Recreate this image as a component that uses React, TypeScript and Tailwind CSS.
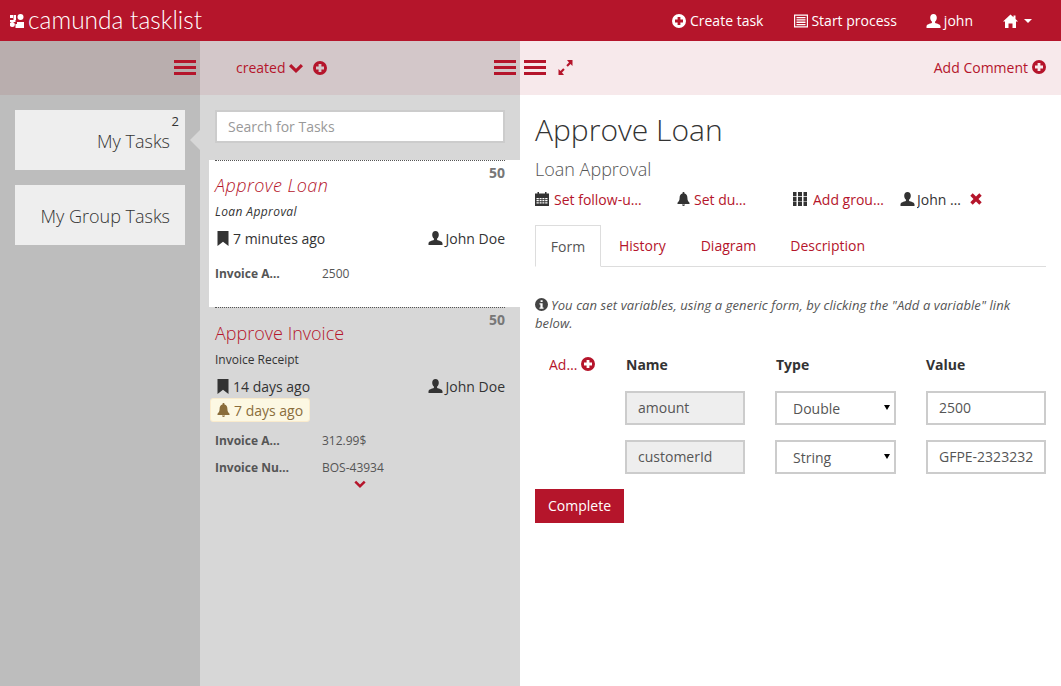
import React from "react";

type IconProps = { className?: string };

const Plus = ({ className = "" }: IconProps) => (
  <svg viewBox="0 0 14 14" className={`w-[14px] h-[14px] fill-current shrink-0 ${className}`}>
    <path fillRule="evenodd" d="M7 0a7 7 0 1 0 0 14A7 7 0 0 0 7 0zM5.600 3h2.800v2.600H11v2.800H8.400V11H5.600V8.400H3V5.600h2.600z" />
  </svg>
);
const User = ({ className = "" }: IconProps) => (
  <svg viewBox="0 0 15 14" className={`w-[15px] h-[14px] fill-current shrink-0 ${className}`}>
    <path d="M7.500 0C9.600 0 10.800 1.500 10.800 3.700c0 1.700-.8 3.200-1.700 3.900v1.300c1.900.7 5.400 1.300 5.400 3.400V14H.5v-1.700c0-2.100 3.500-2.700 5.400-3.400V7.600C5 6.900 4.200 5.400 4.200 3.700 4.200 1.500 5.400 0 7.500 0z" />
  </svg>
);
const ListAlt = () => (
  <svg viewBox="0 0 14 14" className="w-[14px] h-[14px] fill-current shrink-0">
    <path fillRule="evenodd" d="M0 .5h14v13H0zM1.200 1.700v10.600h11.600V1.700z" />
    <path d="M2.500 3h9v1.300h-9zM2.500 5.300h9v1.300h-9zM2.500 7.600h9v1.300h-9zM2.500 9.900h9v1.300h-9z" />
  </svg>
);
const Home = () => (
  <svg viewBox="0 0 15 14" className="w-[15px] h-[14px] fill-current shrink-0">
    <path d="M7.500.5l3 2.700V1.500h2v3.500L15 7.500h-2V14H9.500V9.500h-4V14H2V7.500H0z" />
  </svg>
);
const Bookmark = () => (
  <svg viewBox="0 0 12 15" className="w-[12px] h-[15px] fill-current shrink-0">
    <path d="M.5 0h11v15L6 10.800.5 15z" />
  </svg>
);
const Bell = ({ className = "" }: IconProps) => (
  <svg viewBox="0 0 13 14" className={`w-[13px] h-[14px] fill-current shrink-0 ${className}`}>
    <path d="M6.500 0c.6 0 1 .4 1 1v.6c2 .5 2.900 2.200 2.900 4.200 0 2.600.8 3.900 2.100 5V12H.5v-1.200c1.300-1.100 2.100-2.400 2.100-5 0-2 .9-3.700 2.900-4.200V1c0-.6.400-1 1-1zM5 12.600h3c0 .8-.6 1.400-1.500 1.400S5 13.400 5 12.600z" />
  </svg>
);
const Calendar = () => (
  <svg viewBox="0 0 14 14" className="w-[14px] h-[14px] fill-current shrink-0">
    <path d="M2.500 0h1.500v1.500H2.500zM10 0h1.500v1.500H10zM0 1.500h14V5H0z" />
    <path fillRule="evenodd" d="M0 5h14v9H0zM1.500 6v1.200h2.300V6zM4.600 6v1.200h2V6zM7.400 6v1.200h2V6zM10.200 6v1.200h2.300V6zM1.500 8.100v1.200h2.300V8.100zM4.600 8.100v1.200h2V8.100zM7.400 8.100v1.200h2V8.100zM10.200 8.100v1.200h2.300V8.100zM1.500 10.200v1.200h2.300v-1.200zM4.600 10.200v1.200h2v-1.200zM7.400 10.200v1.200h2v-1.200zM10.200 10.200v1.200h2.300v-1.200z" />
  </svg>
);
const Th = () => (
  <svg viewBox="0 0 14 14" className="w-[14px] h-[14px] fill-current shrink-0">
    <path d="M0 0h3.500v4.100H0zM5 0h4v4.100H5zM10.500 0H14v4.100h-3.500zM0 4.800h3.500v4.100H0zM5 4.800h4v4.100H5zM10.500 4.800H14v4.100h-3.500zM0 9.600h3.500V14H0zM5 9.600h4V14H5zM10.500 9.600H14V14h-3.500z" />
  </svg>
);
const Remove = () => (
  <svg viewBox="0 0 12 12" className="w-[12px] h-[12px] fill-current shrink-0">
    <path d="M2.700.3L6 3.500 9.300.3l2.400 2.400L8.500 6l3.200 3.300-2.400 2.400L6 8.500l-3.300 3.200L.3 9.300 3.500 6 .3 2.700z" />
  </svg>
);
const Info = () => (
  <svg viewBox="0 0 14 14" className="w-[13px] h-[13px] fill-current shrink-0">
    <path fillRule="evenodd" d="M7 0a7 7 0 1 0 0 14A7 7 0 0 0 7 0zM6 2.400h2.200v2H6zM4.800 5.600h3.400v4.500h1v1.400H4.800v-1.400h1V7H4.800z" />
  </svg>
);
const Chevron = ({ className = "" }: IconProps) => (
  <svg viewBox="0 0 14 10" className={`fill-current shrink-0 ${className}`}>
    <path d="M0 3.200L2.200 1 7 5.700 11.800 1 14 3.200 7 10z" />
  </svg>
);
const Expand = () => (
  <svg viewBox="0 0 15 15" className="w-[15px] h-[15px] fill-current shrink-0">
    <path d="M14.500 0v6l-2-2-2.700 2.700-1.500-1.500L11 2.500l-2-2.500zM.5 15V9l2 2 2.700-2.700 1.500 1.500L4 12.500l2 2.500z" />
  </svg>
);
const Burger = () => (
  <button className="flex flex-col gap-[3px] w-[22px] text-[#b5152b]" aria-label="toggle">
    <span className="block h-[3px] bg-current" />
    <span className="block h-[3px] bg-current" />
    <span className="block h-[3px] bg-current" />
  </button>
);
const Logo = () => (
  <svg viewBox="0 0 14 14" className="w-[14px] h-[14px] fill-white shrink-0">
    <rect x="0" y="1" width="3" height="3" />
    <rect x="3.500" y="1" width="2.500" height="5" />
    <circle cx="10.500" cy="3" r="3" />
    <circle cx="2.300" cy="10.500" r="2.500" />
    <rect x="0" y="6" width="5.500" height="2" />
    <rect x="7" y="8" width="7" height="6" />
    <rect x="5.500" y="10" width="2" height="4" />
  </svg>
);

const Var = ({ name, value }: { name: string; value: string }) => (
  <div className="flex items-center h-[27px]">
    <span className="w-[76px] mr-[31px] truncate font-bold text-[12px] text-[#555]">{name}</span>
    <span className="text-[12px] text-[#555]">{value}</span>
  </div>
);

const VarRow = ({ name, type, value }: { name: string; type: string; value: string }) => (
  <div className="flex ml-[90px] mb-[15px]">
    <input readOnly value={name} className="w-[120px] h-[34px] border-2 border-[#ccc] bg-[#eee] px-[11px] pb-[1px] text-[14px] text-[#555] outline-none" />
    <div className="relative w-[121px] h-[34px] ml-[30px]">
      <select defaultValue={type} className="appearance-none w-full h-full border-2 border-[#ccc] bg-white pl-[16px] text-[14px] text-[#555] outline-none">
        <option>Double</option>
        <option>String</option>
      </select>
      <span className="absolute right-[6px] top-[14px] w-0 h-0 border-x-[3px] border-x-transparent border-t-[5px] border-t-black" />
    </div>
    <input readOnly value={value} className="w-[120px] h-[34px] ml-[30px] border-2 border-[#ccc] bg-white px-[11px] pb-[1px] text-[14px] text-[#555] outline-none" />
  </div>
);

export default function App() {
  return (
    <div className="w-[1061px] h-[686px] overflow-hidden flex flex-col bg-white text-[14px] text-[#333] font-['Open_Sans',sans-serif]">
      <header className="h-[41px] bg-[#b5152b] text-white flex items-center shrink-0">
        <div className="flex items-center pl-[10px] gap-[4px]">
          <Logo />
          <span className="font-['Lato',sans-serif] font-light text-[24.500px] leading-none pb-[1px]">camunda tasklist</span>
        </div>
        <nav className="ml-auto flex items-center pr-[29px]">
          <a className="flex items-center gap-[4px] mr-[31px]"><Plus />Create task</a>
          <a className="flex items-center gap-[3px] mr-[29px]"><ListAlt />Start process</a>
          <a className="flex items-center gap-[3px] mr-[30px]"><User />john</a>
          <a className="flex items-center gap-[6px]">
            <Home />
            <span className="w-0 h-0 border-x-[4px] border-x-transparent border-t-[4px] border-t-white" />
          </a>
        </nav>
      </header>
      <div className="flex flex-1 min-h-0">
        <aside className="w-[200px] shrink-0 bg-[#bdbdbd] flex flex-col">
          <div className="h-[54px] bg-[#b9aeae] flex items-center justify-end pr-[4px] pb-[1px]"><Burger /></div>
          <div className="pl-[15px] pr-[15px] pt-[15px] flex flex-col gap-[15px] relative">
            <div className="h-[60px] bg-[#eee] relative flex items-center justify-end pr-[15px] pt-[2px]">
              <span className="absolute top-[2px] right-[6px] text-[13px]">2</span>
              <span className="text-[18px] font-light text-[#333]">My Tasks</span>
            </div>
            <div className="h-[60px] bg-[#eee] flex items-center justify-end pr-[15px] pt-[2px]">
              <span className="text-[18px] font-light text-[#333]">My Group Tasks</span>
            </div>
            <span className="absolute right-0 top-[35px] w-0 h-0 border-y-[10px] border-y-transparent border-r-[10px] border-r-[#d7d7d7]" />
          </div>
        </aside>
        <section className="w-[320px] shrink-0 bg-[#d7d7d7] flex flex-col">
          <div className="h-[54px] bg-[#d3c7c9] flex items-center pl-[36px] pr-[4px] pb-[1px] text-[#b5152b]">
            <span className="pb-[1px]">created</span>
            <Chevron className="w-[14px] h-[10px] ml-[3px]" />
            <Plus className="ml-[10px]" />
            <span className="ml-auto"><Burger /></span>
          </div>
          <div className="px-[15px] pt-[15px] pb-[17px]">
            <input placeholder="Search for Tasks" className="w-full h-[33px] bg-white border-2 border-[#ccc] px-[11px] text-[14px] outline-none placeholder:text-[#999]" />
          </div>
          <article className="ml-[9px] h-[147px] bg-white pl-[6px] pr-[15px] relative">
            <div className="border-t border-dotted border-[#555] h-full relative">
              <span className="absolute right-0 top-[1px] font-bold text-[14px] text-[#777]">50</span>
              <h4 className="pt-[12px] text-[18px] leading-[24px] italic font-light tracking-[0.45px] text-[#b5152b]">Approve Loan</h4>
              <p className="mt-[6px] text-[12px] leading-[17px] italic tracking-[0.4px]">Loan Approval</p>
              <div className="flex items-center justify-between mt-[8px] h-[20px]">
                <span className="flex items-center gap-[4px] pl-[2px]"><Bookmark />7 minutes ago</span>
                <span className="flex items-center gap-[3px]"><User />John Doe</span>
              </div>
              <div className="mt-[12px]"><Var name="Invoice Amount" value="2500" /></div>
            </div>
          </article>
          <article className="ml-[15px] mr-[15px] border-t border-dotted border-[#555] relative">
            <span className="absolute right-0 top-[1px] font-bold text-[14px] text-[#777]">50</span>
            <h4 className="pt-[13px] text-[18px] leading-[24px] font-light text-[#b5152b]">Approve Invoice</h4>
            <p className="mt-[6px] text-[12px] leading-[17px]">Invoice Receipt</p>
            <div className="flex items-center justify-between mt-[8px] h-[20px]">
              <span className="flex items-center gap-[4px] pl-[2px]"><Bookmark />14 days ago</span>
              <span className="flex items-center gap-[3px]"><User />John Doe</span>
            </div>
            <div className="mt-[2px] -ml-[5px] w-fit h-[24px] px-[6px] bg-[#fcf8e3] border border-[#faebcc] rounded-[3px] flex items-center gap-[4px] text-[#8a6d3b]">
              <Bell />7 days ago
            </div>
            <div className="mt-[5px]">
              <Var name="Invoice Amount" value="312.99$" />
              <Var name="Invoice Number" value="BOS-43934" />
            </div>
            <div className="flex justify-center text-[#b5152b] -mt-[1px]"><Chevron className="w-[12px] h-[8px]" /></div>
          </article>
        </section>
        <main className="flex-1 min-w-0 flex flex-col">
          <div className="h-[54px] bg-[#f7e9eb] flex items-center pl-[4px] pr-[15px] pb-[1px] text-[#b5152b]">
            <Burger />
            <span className="ml-[12px] pb-[1px]"><Expand /></span>
            <span className="ml-auto flex items-center gap-[4px] pb-[1px]">Add Comment<Plus /></span>
          </div>
          <div className="px-[15px]">
            <h2 className="mt-[14px] text-[30px] leading-[42px] font-light">Approve Loan</h2>
            <h3 className="mt-[6px] text-[18px] leading-[24px] font-light text-[#555]">Loan Approval</h3>
            <div className="flex items-center h-[20px] mt-[8px]">
              <span className="w-[142px] flex items-center gap-[5px]"><Calendar /><a className="text-[#b5152b] truncate w-[90px]">Set follow-up date</a></span>
              <span className="w-[116px] flex items-center gap-[4px]"><Bell /><a className="text-[#b5152b] truncate w-[56px]">Set due date</a></span>
              <span className="w-[107px] flex items-center gap-[6px]"><Th /><a className="text-[#b5152b] truncate w-[72px]">Add groups</a></span>
              <span className="flex items-center gap-[2px]"><User /><span className="truncate w-[44px]">John Doe</span></span>
              <span className="ml-[9px] text-[#b5152b]"><Remove /></span>
            </div>
            <div className="flex h-[42px] mt-[16px] border-b border-[#ddd]">
              <span className="h-[42px] w-[66px] flex items-center justify-center border border-[#ddd] border-b-white bg-white text-[#555]">Form</span>
              <a className="px-[18px] flex items-center text-[#b5152b]">History</a>
              <a className="px-[17px] flex items-center text-[#b5152b]">Diagram</a>
              <a className="px-[17px] flex items-center text-[#b5152b]">Description</a>
            </div>
            <p className="mt-[29px] text-[13px] leading-[18px] italic tracking-[0.09px] text-[#555] pr-[20px]">
              <span className="inline-block align-[-1px] mr-[3px] text-[#444]"><Info /></span>
              You can set variables, using a generic form, by clicking the "Add a variable" link below.
            </p>
            <div className="flex items-center h-[20px] mt-[22px] mb-[17px]">
              <a className="w-[91px] pl-[14px] flex items-center gap-[2px] text-[#b5152b]"><span className="truncate w-[30px]">Add a variable</span><Plus /></a>
              <b className="w-[150px]">Name</b>
              <b className="w-[150px]">Type</b>
              <b>Value</b>
            </div>
            <VarRow name="amount" type="Double" value="2500" />
            <VarRow name="customerId" type="String" value="GFPE-2323232" />
            <button className="h-[34px] w-[89px] bg-[#b5152b] text-white pb-[2px]">Complete</button>
          </div>
        </main>
      </div>
    </div>
  );
}
